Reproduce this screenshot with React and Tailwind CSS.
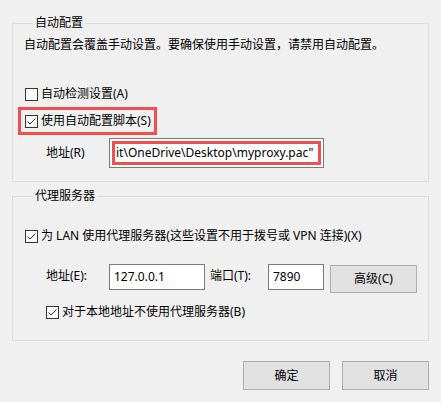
function Check({ checked }) {
  return (
    <svg width="13" height="13" viewBox="0 0 13 13" className="shrink-0">
      <rect x="0.5" y="0.5" width="12" height="12" fill="#fff" stroke="#333" />
      {checked && <path d="M2.5 6.5 L5 9 L10.5 3.5" fill="none" stroke="#333" strokeWidth="1" />}
    </svg>
  )
}

function CheckRow({ checked, children, className = '' }) {
  return (
    <div className={`flex h-[16px] items-center gap-[3px] leading-[16px] ${className}`}>
      <Check checked={checked} />
      <span>{children}</span>
    </div>
  )
}

function Button({ children, className = '' }) {
  return (
    <div className={`flex items-center justify-center border border-[#adadad] bg-[#e1e1e1] ${className}`}>
      {children}
    </div>
  )
}

export default function App() {
  return (
    <div
      className="h-[402px] w-[441px] overflow-hidden bg-[#f0f0f0] text-[12px] text-black"
      style={{ fontFamily: '"Noto Sans", "Noto Sans CJK SC", sans-serif' }}
    >
      <fieldset className="ml-[12px] mt-[15px] w-[417px] border border-[#dcdcdc] pb-[13px] pl-[12px]">
        <legend className="ml-[8px] px-[2px] leading-[16px]">自动配置</legend>
        <p className="-ml-[1px] mt-[6px] leading-[16px]">自动配置会覆盖手动设置。要确保使用手动设置，请禁用自动配置。</p>
        <CheckRow className="mt-[33px]">自动检测设置(A)</CheckRow>
        <div className="-ml-[7px] mt-[5px] w-[139px] border-[3px] border-[#f04f4f] py-[3px] pl-[4px]">
          <CheckRow checked>使用自动配置脚本(S)</CheckRow>
        </div>
        <div className="mt-[3px] flex items-center">
          <span className="ml-[21px] w-[63px] leading-[16px]">地址(R)</span>
          <div className="h-[30px] w-[215px] border border-[#7a7a7a] bg-white p-[2px]">
            <div className="flex h-full items-center overflow-hidden whitespace-nowrap border-[3px] border-[#f04f4f] pl-[1px] leading-[16px]">
              it\OneDrive\Desktop\myproxy.pac"
            </div>
          </div>
        </div>
      </fieldset>

      <fieldset className="ml-[12px] mt-[6px] w-[417px] border border-[#dcdcdc] pb-[20px] pl-[12px]">
        <legend className="ml-[8px] px-[2px] leading-[16px]">代理服务器</legend>
        <CheckRow checked className="mt-[24px]">为 LAN 使用代理服务器(这些设置不用于拨号或 VPN 连接)(X)</CheckRow>
        <div className="mt-[20px] flex items-start">
          <span className="ml-[21px] mt-[4px] w-[63px] leading-[16px]">地址(E):</span>
          <div className="flex h-[26px] w-[96px] items-center border border-[#7a7a7a] bg-white pl-[4px] leading-[16px]">127.0.0.1</div>
          <span className="ml-[5px] mt-[4px] w-[58px] leading-[16px]">端口(T):</span>
          <div className="flex h-[26px] w-[56px] items-center border border-[#7a7a7a] bg-white pl-[4px] leading-[16px]">7890</div>
          <Button className="ml-[6px] mt-[1px] h-[28px] w-[87px]">高级(C)</Button>
        </div>
        <CheckRow checked className="ml-[21px] mt-[11px]">对于本地地址不使用代理服务器(B)</CheckRow>
      </fieldset>

      <div className="mt-[20px] flex w-[429px] justify-end gap-[12px]">
        <Button className="h-[29px] w-[87px]">确定</Button>
        <Button className="h-[29px] w-[87px]">取消</Button>
      </div>
    </div>
  )
}
